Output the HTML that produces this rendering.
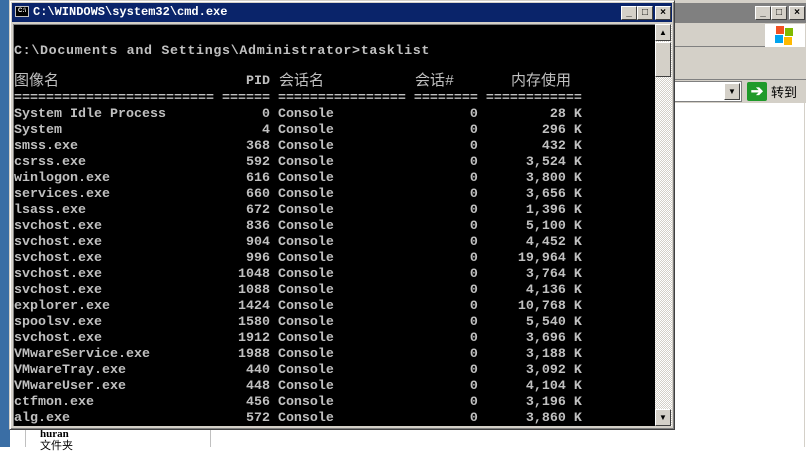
<!DOCTYPE html>
<html><head><meta charset="utf-8"><style>
*{margin:0;padding:0;box-sizing:border-box}
body{width:806px;height:447px;overflow:hidden;background:#fff;position:relative;font-family:"Liberation Mono","Noto Sans CJK SC",monospace}
.a{position:absolute}
#con .l{position:absolute;left:14px;white-space:pre;color:#c0c0c0;font-family:"Liberation Mono","Noto Sans CJK SC",monospace;font-size:13.33px;font-weight:bold;line-height:16px;height:16px}
.btn{position:absolute;width:16px;height:14px;background:#d4d0c8;border:1px solid;border-color:#fff #404040 #404040 #fff;font:bold 10px "Liberation Sans",sans-serif;text-align:center;line-height:12px;color:#000}
</style></head><body>
<div class="a" style="left:0;top:0;width:10px;height:447px;background:#3a6ea5"></div>
<div class="a" style="left:670px;top:0;width:136px;height:447px;background:#d4d0c8"></div>
<div class="a" style="left:674px;top:3px;width:132px;height:20px;background:#808080"></div>
<div class="btn" style="left:755px;top:6px">_</div>
<div class="btn" style="left:771px;top:6px">□</div>
<div class="btn" style="left:789px;top:6px">×</div>
<div class="a" style="left:674px;top:24px;width:130px;height:23px;background:#d4d0c8;border-bottom:1px solid #808080"></div>
<div class="a" style="left:765px;top:24px;width:40px;height:23px;background:#fff"></div>
<div class="a" style="left:776px;top:26px;width:8px;height:8px;background:#f25022"></div>
<div class="a" style="left:785px;top:28px;width:8px;height:8px;background:#7fba00"></div>
<div class="a" style="left:775px;top:35px;width:8px;height:8px;background:#00a4ef"></div>
<div class="a" style="left:784px;top:37px;width:8px;height:8px;background:#ffb900"></div>
<div class="a" style="left:674px;top:79px;width:132px;height:1px;background:#808080"></div>
<div class="a" style="left:674px;top:81px;width:68px;height:21px;background:#fff;border:1px solid #808080"></div>
<div class="btn" style="left:724px;top:83px;height:17px;font-size:8px;line-height:15px">▼</div>
<div class="a" style="left:747px;top:82px;width:20px;height:19px;background:#1f9a2a;border-radius:2px;color:#fff;font:bold 15px 'Liberation Sans',sans-serif;text-align:center;line-height:19px">➔</div>
<div class="a" style="left:771px;top:82px;font:13px 'Noto Sans CJK SC',sans-serif;line-height:19px;color:#000">转到</div>
<div class="a" style="left:674px;top:103px;width:132px;height:344px;background:#fff"></div>
<div class="a" style="left:804px;top:103px;width:1px;height:344px;background:#d4d0c8"></div>
<div class="a" style="left:10px;top:428px;width:664px;height:19px;background:#fff"></div>
<div class="a" style="left:25px;top:428px;width:1px;height:19px;background:#c0c0c0"></div>
<div class="a" style="left:210px;top:428px;width:1px;height:19px;background:#c0c0c0"></div>
<div class="a" style="left:40px;top:428px;font:bold 11px 'Liberation Serif',serif;line-height:13px">huran</div>
<div class="a" style="left:40px;top:439px;font:11px 'Noto Sans CJK SC',sans-serif;line-height:12px">文件夹</div>
<div class="a" style="left:9px;top:0;width:666px;height:430px;background:#d4d0c8;border:1px solid;border-color:#d4d0c8 #404040 #404040 #d4d0c8;box-shadow:inset 1px 1px #fff,inset -1px -1px #808080"></div>
<div class="a" style="left:12px;top:3px;width:660px;height:19px;background:#0a246a"></div>
<div class="a" style="left:15px;top:6px;width:14px;height:11px;background:#000;border:1px solid #c0c0c0;color:#fff;font:bold 6px 'Liberation Sans',sans-serif;line-height:9px;text-align:center">C:\</div>
<div class="a" style="left:33px;top:4px;color:#fff;font:bold 12px 'Liberation Mono',monospace;line-height:17px">C:\WINDOWS\system32\cmd.exe</div>
<div class="btn" style="left:621px;top:6px">_</div>
<div class="btn" style="left:637px;top:6px">□</div>
<div class="btn" style="left:655px;top:6px">×</div>
<div class="a" style="left:13px;top:24px;width:642px;height:402px;background:#000;border-top:1px solid #808080;border-left:1px solid #808080"></div>
<div class="a" style="left:655px;top:24px;width:17px;height:402px;background:repeating-conic-gradient(#fff 0 25%,#d4d0c8 0 50%) 0 0/2px 2px"></div>
<div class="btn" style="left:655px;top:24px;height:17px;font-size:8px;line-height:15px">▲</div>
<div class="btn" style="left:655px;top:42px;height:35px"></div>
<div class="btn" style="left:655px;top:409px;height:17px;font-size:8px;line-height:15px">▼</div>
<div id="con" class="a" style="left:0;top:2px">
<div class="l" style="top:42px;letter-spacing:0.67px">C:\Documents and Settings\Administrator&gt;tasklist</div>
<div class="l" style="top:72px;font-weight:normal;font-size:15px">图像名</div>
<div class="l" style="top:72px;left:246px">PID</div>
<div class="l" style="top:72px;left:279px;font-weight:normal;font-size:15px">会话名</div>
<div class="l" style="top:72px;left:415px;font-weight:normal;font-size:15px">会话#</div>
<div class="l" style="top:72px;left:511px;font-weight:normal;font-size:15px">内存使用</div>
<div class="l" style="top:89px">========================= ====== ================ ======== ============</div>
<div class="l" style="top:105px">System Idle Process            0 Console                 0         28 K
System                         4 Console                 0        296 K
smss.exe                     368 Console                 0        432 K
csrss.exe                    592 Console                 0      3,524 K
winlogon.exe                 616 Console                 0      3,800 K
services.exe                 660 Console                 0      3,656 K
lsass.exe                    672 Console                 0      1,396 K
svchost.exe                  836 Console                 0      5,100 K
svchost.exe                  904 Console                 0      4,452 K
svchost.exe                  996 Console                 0     19,964 K
svchost.exe                 1048 Console                 0      3,764 K
svchost.exe                 1088 Console                 0      4,136 K
explorer.exe                1424 Console                 0     10,768 K
spoolsv.exe                 1580 Console                 0      5,540 K
svchost.exe                 1912 Console                 0      3,696 K
VMwareService.exe           1988 Console                 0      3,188 K
VMwareTray.exe               440 Console                 0      3,092 K
VMwareUser.exe               448 Console                 0      4,104 K
ctfmon.exe                   456 Console                 0      3,196 K
alg.exe                      572 Console                 0      3,860 K</div>
</div>
</body></html>
